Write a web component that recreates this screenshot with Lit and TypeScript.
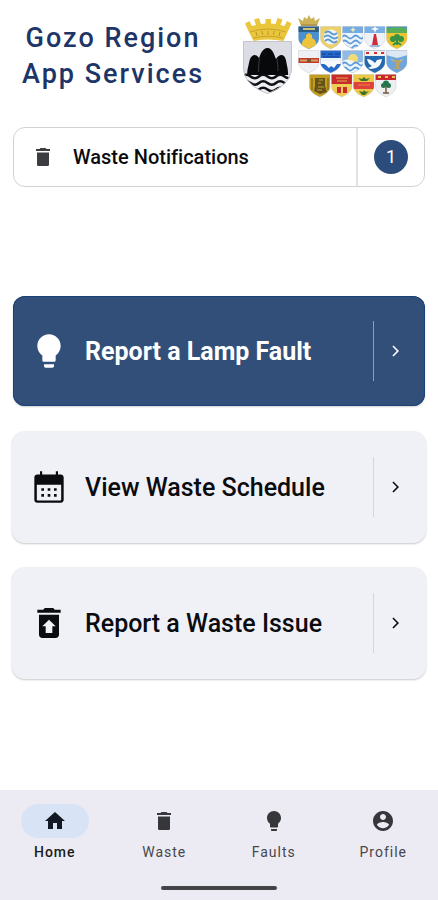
import { LitElement, html, svg, css } from "lit";
import type { SVGTemplateResult } from "lit";
import { customElement } from "lit/decorators.js";
import { classMap } from "lit/directives/class-map.js";

const glyph = (body: SVGTemplateResult) =>
  html`<svg class="icon" viewBox="0 0 24 24" aria-hidden="true">${body}</svg>`;

const icons = {
  trash: svg`<path d="M6 7.600h12V19.400c0 .9-.7 1.600-1.600 1.600H7.600C6.700 21 6 20.300 6 19.400zM19 4h-3.500l-1-1h-5l-1 1H5v2h14z"/>`,
  bulb: svg`<path d="M9 21c0 .55.45 1 1 1h4c.55 0 1-.45 1-1v-1H9zM12 2C8.100 2 5 5.100 5 9c0 2.400 1.200 4.500 3 5.700V17.500c0 .55.45 1 1 1h6c.55 0 1-.45 1-1v-2.800c1.800-1.300 3-3.400 3-5.700 0-3.900-3.100-7-7-7z"/>`,
  calendar: svg`<path fill-rule="evenodd" d="M6.600 2.600h1.300v1.900h8.200V2.600h1.300v1.900h1.700c.9 0 1.700.8 1.700 1.700v13.600c0 .9-.8 1.700-1.700 1.700H4.900c-.9 0-1.700-.8-1.700-1.700V6.200c0-.9.8-1.700 1.700-1.700h1.700zM4.700 10.600v9c0 .3.200.5.5.5h13.600c.3 0 .5-.2.500-.5v-9z"/><path d="M7.400 12.700H9v1.600H7.400zm3.800 0h1.600v1.600h-1.600zm3.800 0h1.600v1.600H15zM7.400 16.200H9v1.600H7.400zm3.800 0h1.600v1.600h-1.600zm3.800 0h1.600v1.600H15z"/>`,
  restore: svg`<path d="M19 4h-3.500l-1-1h-5l-1 1H5v1.800h14zM6 7v12c0 1.100.9 2 2 2h8c1.100 0 2-.9 2-2V7zm8 7v4h-4v-4H8l4-4 4 4z"/>`,
  chevron: svg`<path d="M9.500 6.500 8.400 7.600 12.800 12l-4.400 4.400 1.100 1.100L15 12z"/>`,
  home: svg`<path d="M10 20v-6h4v6h5v-8h3L12 3 2 12h3v8z"/>`,
  person: svg`<path d="M12 2C6.480 2 2 6.480 2 12s4.480 10 10 10 10-4.480 10-10S17.520 2 12 2zm0 3c1.660 0 3 1.340 3 3s-1.340 3-3 3-3-1.340-3-3 1.340-3 3-3zm0 14.200c-2.500 0-4.710-1.280-6-3.220.03-1.990 4-3.080 6-3.080 1.990 0 5.970 1.090 6 3.080-1.290 1.940-3.500 3.220-6 3.220z"/>`,
};

const BLUE = "#5b9bdc";
const wave = (y: number, color: string) =>
  svg`<path d="M0 ${y}q2.750-3 5.500 0t5.500 0t5.500 0t5.500 0" fill="none" stroke=${color} stroke-width="1.800"/>`;
const field = (color: string) => svg`<path d="M0 0h22v24H0z" fill=${color}/>`;

/* Local council arms, each drawn on a 22 x 23 shield. */
const councils: { x: number; y: number; art: SVGTemplateResult }[] = [
  { x: 298, y: 26, art: svg`${field("#4a8fd0")}<path d="M0 0h22v6H0z" fill="#2d5c86"/><path d="M5 3h12" stroke="#c9c27c" stroke-width="2"/><path d="M3 20 5 14l3-2V9l3-2 3 2v3l3 2 2 6-8 4z" fill="#edc43c"/>` },
  { x: 320, y: 26, art: svg`${field("#ecd06a")}<circle cx="11" cy="11" r="7.500" fill="#eef5fa"/><path d="M5 7q3-3 6 0t6 0M4 11q3.500-3 7 0t7 0M5 15q3-3 6 0t6 0" fill="none" stroke="#5c9bd0" stroke-width="1.800"/>` },
  { x: 342, y: 26, art: svg`${field("#edf4fa")}<path d="M0 0h22v7H0z" fill="#74ace2"/><path d="m11 1 1 2 2 .5-2 1-1 2-1-2-2-1 2-.5z" fill="#efe9b8"/>${wave(11, BLUE)}${wave(16, BLUE)}${wave(21, BLUE)}` },
  { x: 364, y: 26, art: svg`${field("#eef1f7")}<path d="M0 0h22v7H0z" fill="#78b0e6"/><path d="m11 0 1 2 3 1-3 1-1 3-1-3-3-1 3-1z" fill="#fff"/><path d="M10 8h2l2 11H8z" fill="#cf2c3a"/><path d="M6 19h10v2H6z" fill="#9bb8d8"/>` },
  { x: 386, y: 26, art: svg`${field("#efc52f")}<path d="M0 0h22v3H0z" fill="#3f9ad2"/><path d="M0 3l4-1 4-1 3 1 4-1 7 2v4H0z" fill="#58ad58"/><circle cx="7" cy="13" r="3" fill="#369344"/><circle cx="15" cy="13" r="3" fill="#369344"/><circle cx="11" cy="11" r="3" fill="#369344"/><path d="M11 10v9M7 19l4-3 4 3" stroke="#369344" stroke-width="2" fill="none"/>` },
  { x: 298, y: 50, art: svg`${field("#eff0f3")}<path d="M0 8h22v5H0z" fill="#c8372c"/><path d="M2 10.500h18" stroke="#d4a15c" stroke-width="2"/><path d="M9 9h4v3H9z" fill="#705b34"/>` },
  { x: 320, y: 50, art: svg`${field("#2769cb")}<path d="M0 8h22v6H0z" fill="#edf3fa"/><path d="m2 13 4 2 3 3 2-2 3 2 3-4 3-1v-2H2z" fill="#f8f9fb"/><path d="M2 4h4m2 0h5m2 0h5M3 7h16" fill="none" stroke="#174da8" stroke-width="1.500"/>` },
  { x: 342, y: 50, art: svg`${field("#8dbbe6")}<circle cx="11" cy="9" r="5" fill="#f2dc75"/><path d="M0 11q5-3 11 0t11 0v13H0z" fill="#edf4fa"/>${wave(14, BLUE)}${wave(19, BLUE)}` },
  { x: 364, y: 50, art: svg`${field("#2469ae")}<path d="M0 0h22v6H0z" fill="#f4f1f1"/><path d="M2 2h3v2H2zm8 0h3v2h-3zm7 0h3v2h-3z" fill="#cf3035"/><path d="M3 9q4 0 8 4l2-3 5-1q-1 7-6 9l-5 1-3-1 4-2q-4-2-5-7z" fill="#f7faff"/>` },
  { x: 386, y: 50, art: svg`${field("#6da6df")}<path d="M0 0h22v5L11 8 0 5z" fill="#dce8f3"/><path d="M7 10h9l-2 4h-1v4h2v1H8v-1h2v-4z" fill="#bba468"/><path d="m5 9 3 2m6 0 3-2" stroke="#dac378"/>` },
  { x: 309, y: 74, art: svg`${field("#c39d20")}<path d="M6 4h10v8l2 6-7 2-6-3 1-5z" fill="#65531a"/><path d="M10 6h4m-5 3h3m-3 4h6m-7 3h5" stroke="#c8a432"/><path d="M3 4v12M19 4v12" stroke="#765e18"/>` },
  { x: 331, y: 74, art: svg`${field("#efcd55")}<path d="M0 0h22v10H0z" fill="#c72b2c"/><path d="M5 4h12M6 7h10" stroke="#e2ab48"/><path d="M6 13h4v6H6zm6 0h4v6h-4z" fill="#c72b2c"/>` },
  { x: 353, y: 74, art: svg`${field("#edc845")}<path d="M0 8h22v7H0z" fill="#df403c"/><path d="m5 4 4 1 2-2 2 2 4-1-3 3H8zM6 17l4 1 1-2 2 2 3-1-4 4h-3z" fill="#3d722d"/><path d="M5 11h12" stroke="#e68a43"/>` },
  { x: 375, y: 74, art: svg`${field("#eeeff0")}<path d="M0 0h22v6H0z" fill="#c82730"/><path d="M3 3h3m4 0h3m4 0h3" stroke="#efc34b" stroke-width="2"/><circle cx="11" cy="9.500" r="3" fill="#24754c"/><circle cx="8.500" cy="11.500" r="2.500" fill="#24754c"/><circle cx="13.500" cy="11.500" r="2.500" fill="#24754c"/><path d="M11 12v7m-3 0h6" stroke="#72573b" stroke-width="1.500"/>` },
];

const arms = html`
  <svg class="arms" viewBox="240 12 172 88" role="img" aria-label="Arms of Gozo and its local councils">
    <defs>
      <clipPath id="shield"><path d="M.5.5h20.500v12c0 5-5 8-10.200 10.500C5.500 20.500.5 17.500.5 12.500z"/></clipPath>
      <clipPath id="gozo"><path d="M243 41h49v26c0 14-12 22-24.500 27C255 89 243 81 243 67z"/></clipPath>
    </defs>
    <path d="m253.500 41-6-12-2.500-5.500 4.500-2.500 2.500 5 4-1-2-5.500 5-1.500 2 6 4.500-.5V19h5.500v4.500l4.500.5 2-6 5 1.500-2 5.500 4 1 2.500-5 4.500 2.500-2.500 5.500-5.500 12q-15-3-30 0z" fill="#e9c63c"/>
    <path d="M250 32q18-6 36 0M253 38q15-3.500 30 0" fill="none" stroke="#c9a32c"/>
    <path d="m256 32 1 4m5-5 .5 4m5.500-4v4m6-4-.5 4m6.500-3-1 4" stroke="#b8942c"/>
    <g clip-path="url(#gozo)">
      <path d="M243 41h49v54h-49z" fill="#dcdde4"/>
      <path d="M247 76q0-6 2-13 1-7 5-8 3-.5 5 3l2-5q3-5 6.500-5t6 5l2.500 6q3-4.500 6-4 3.500.5 4.500 8 2 8 1.500 13z" fill="#08090b"/>
      <path d="M259.500 58q-1 7-1 14m18.500-13q1 6 1 12" fill="none" stroke="#3a3b40"/>
      <path d="M242 75h51v22h-51z" fill="#eff0f4"/>
      <path d="M242 76.500q4-3.500 8.500 0t8.500 0t8.500 0t8.500 0t8.500 0t8.500 0M242 83q4-3.500 8.500 0t8.500 0t8.500 0t8.500 0t8.500 0t8.500 0M242 89.500q4-3.500 8.500 0t8.500 0t8.500 0t8.500 0t8.500 0t8.500 0" fill="none" stroke="#101115" stroke-width="2.600"/>
    </g>
    <path d="M243.500 41.500h48V67c0 14-12 22-24 26.500-12-4.500-24-12.500-24-26.500z" fill="none" stroke="#c5c6cc"/>
    <path d="m301 26-3-8 5 3 1-4 3 2 2-4 2 4 3-2 1 4 5-3-3 8z" fill="#cdb258"/>
    <path d="M301 25h16" stroke="#95804a"/>
    ${councils.map(
      (c) => svg`<g transform="translate(${c.x} ${c.y})">
        <g clip-path="url(#shield)">${c.art}</g>
        <path d="M.5.5h20.500v12c0 5-5 8-10.200 10.500C5.500 20.500.5 17.500.5 12.500z" fill="none" stroke="#a3a8b2" stroke-opacity=".35" stroke-width=".8"/>
      </g>`
    )}
  </svg>`;

const actions = [
  { label: "Report a Lamp Fault", icon: icons.bulb, primary: true },
  { label: "View Waste Schedule", icon: icons.calendar, primary: false },
  { label: "Report a Waste Issue", icon: icons.restore, primary: false },
];

const tabs = [
  { label: "Home", icon: icons.home, active: true },
  { label: "Waste", icon: icons.trash, active: false },
  { label: "Faults", icon: icons.bulb, active: false },
  { label: "Profile", icon: icons.person, active: false },
];

@customElement("app-root")
export class AppRoot extends LitElement {
  static styles = css`
    :host {
      display: flex;
      flex-direction: column;
      min-height: 100vh;
      box-sizing: border-box;
      background: #fff;
      color: #0b0c0f;
      font-family: Roboto, "Liberation Sans", sans-serif;
      font-variant-ligatures: none;
    }
    * { box-sizing: border-box; }
    button {
      font: inherit;
      font-variant-ligatures: none;
      color: inherit;
      text-align: left;
      cursor: pointer;
    }
    .icon {
      display: block;
      width: 24px;
      height: 24px;
      fill: currentColor;
      flex: none;
    }
    .header {
      display: flex;
      align-items: center;
      justify-content: space-between;
      padding: 12px 26px 0 22px;
    }
    .title {
      margin: 0;
      font-size: 27px;
      line-height: 36px;
      font-weight: 500;
      letter-spacing: 2px;
      text-align: center;
      color: #1d3567;
    }
    .title span { display: block; }
    .arms {
      display: block;
      width: 172px;
      height: 88px;
      flex: none;
    }
    .main {
      flex: 1;
      padding: 27px 13px 24px;
    }
    .notice {
      display: flex;
      align-items: stretch;
      width: 100%;
      height: 60px;
      padding: 0;
      border: 1px solid #d2d2d4;
      border-radius: 12px;
      background: #fff;
    }
    .notice-label {
      flex: 1;
      display: flex;
      align-items: center;
      gap: 18px;
      padding-left: 17px;
      font-size: 20px;
      font-weight: 500;
    }
    .notice-label .icon { color: #3c3d40; }
    .notice-count {
      display: flex;
      align-items: center;
      justify-content: center;
      width: 68px;
      border-left: 2px solid #e2e2e4;
    }
    .badge {
      width: 34px;
      height: 34px;
      border-radius: 50%;
      background: #2c4d7c;
      color: #fff;
      font-size: 18px;
      line-height: 34px;
      text-align: center;
    }
    .actions {
      display: grid;
      gap: 26px;
      margin-top: 109px;
    }
    .action {
      display: flex;
      align-items: center;
      width: 100%;
      height: 110px;
      padding: 0 17px 0 16px;
      border: 0;
      border-radius: 12px;
      background: #f0f1f7;
      box-shadow: 0 0 0 1px #f0f1f7, 0 1px 2px 1px #00000038;
      font-size: 25px;
      font-weight: 500;
    }
    .action.primary {
      background: #314f79;
      box-shadow: inset 0 0 0 1px #194378, 0 1px 2px #00000030;
      color: #fff;
      font-weight: 700;
    }
    .lead { display: flex; }
    .lead .icon {
      width: 40px;
      height: 40px;
    }
    .action .text {
      flex: 1;
      padding-left: 16px;
    }
    .action .go {
      display: flex;
      align-items: center;
      height: 60px;
      padding-left: 10px;
      border-left: 1px solid #d5d6dc;
    }
    .action.primary .go { border-color: #8d9db5; }
    .nav {
      background: #ecebf4;
      padding: 14px 0 10px;
    }
    .tabs {
      display: grid;
      grid-template-columns: repeat(4, 1fr);
    }
    .tab {
      display: flex;
      flex-direction: column;
      align-items: center;
      gap: 5px;
      color: #46474b;
      font-size: 14px;
      line-height: 18px;
      font-weight: 400;
      letter-spacing: 1px;
      text-decoration: none;
    }
    .pill {
      display: flex;
      align-items: center;
      justify-content: center;
      width: 68px;
      height: 34px;
      border-radius: 17px;
    }
    .pill .icon { color: #36373a; }
    .tab.active { color: #1b1c20; font-weight: 500; }
    .active .pill { background: #d9e3f6; }
    .active .pill .icon { color: #121922; }
    .handle {
      width: 116px;
      height: 4px;
      margin: 25px auto 0;
      border-radius: 2px;
      background: #444448;
    }
  `;

  render() {
    return html`
      <header class="header">
        <h1 class="title"><span>Gozo Region</span><span>App Services</span></h1>
        ${arms}
      </header>
      <main class="main">
        <button class="notice" type="button">
          <span class="notice-label">${glyph(icons.trash)}<span>Waste Notifications</span></span>
          <span class="notice-count"><span class="badge">1</span></span>
        </button>
        <div class="actions">
          ${actions.map(
            (a) => html`<button type="button" class=${classMap({ action: true, primary: a.primary })}>
              <span class="lead">${glyph(a.icon)}</span>
              <span class="text">${a.label}</span>
              <span class="go">${glyph(icons.chevron)}</span>
            </button>`
          )}
        </div>
      </main>
      <nav class="nav" aria-label="Main">
        <div class="tabs">
          ${tabs.map(
            (t) => html`<a href="#${t.label.toLowerCase()}" class=${classMap({ tab: true, active: t.active })}>
              <span class="pill">${glyph(t.icon)}</span>
              <span>${t.label}</span>
            </a>`
          )}
        </div>
        <div class="handle"></div>
      </nav>
    `;
  }
}
